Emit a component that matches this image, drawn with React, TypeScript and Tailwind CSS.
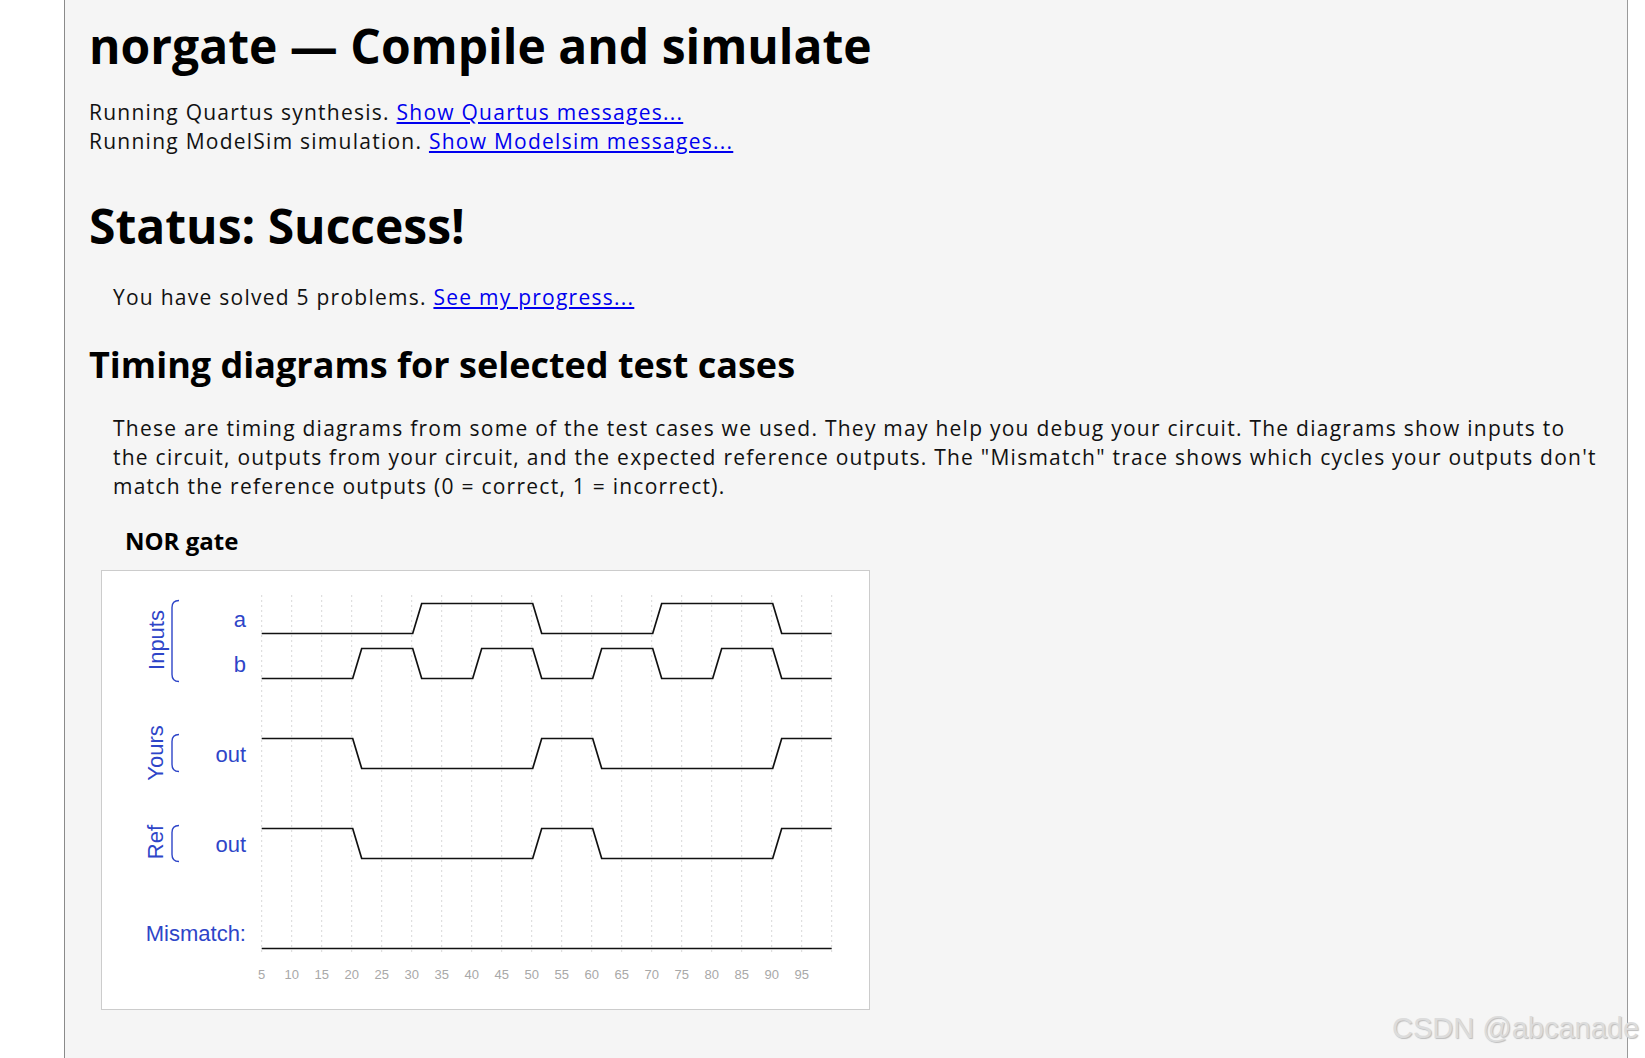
import React from "react";

const BLUE = "#2e45c8";
const SANS = "Liberation Sans, Arial, sans-serif";

function x(t: number) {
  return 159.7 + (t - 5) * 6;
}

function wave(edges: number[], startHigh: boolean, hi: number, lo: number) {
  let level = startHigh;
  let d = `M ${x(5)} ${level ? hi : lo}`;
  for (const t of edges) {
    d += ` L ${x(t) + 1} ${level ? hi : lo}`;
    level = !level;
    d += ` L ${x(t) + 10} ${level ? hi : lo}`;
  }
  d += ` L ${x(100)} ${level ? hi : lo}`;
  return d;
}

function Bracket({ y1, y2 }: { y1: number; y2: number }) {
  const d = `M 77 ${y1} Q 70 ${y1} 70 ${y1 + 7} L 70 ${y2 - 7} Q 70 ${y2} 77 ${y2}`;
  return <path d={d} fill="none" stroke={BLUE} strokeWidth={1.4} />;
}

function Diagram() {
  const grid = Array.from({ length: 20 }, (_, k) => 159.7 + 30 * k);
  const labels = Array.from({ length: 19 }, (_, k) => 5 + 5 * k);
  return (
    <svg width="767" height="438" viewBox="0 0 767 438" className="block">
      <g transform="translate(0 1.5)">
        {grid.map((gx, i) => (
          <line
            key={i}
            x1={gx}
            x2={gx}
            y1={23}
            y2={380}
            stroke="#b0b0b0"
            strokeWidth={1}
            strokeDasharray="1 4"
          />
        ))}
        <g fill="none" stroke="#111" strokeWidth={1.7}>
          <path d={wave([30, 50, 70, 90], false, 31, 61)} />
          <path d={wave([20, 30, 40, 50, 60, 70, 80, 90], false, 76, 106)} />
          <path d={wave([20, 50, 60, 90], true, 166, 196)} />
          <path d={wave([20, 50, 60, 90], true, 256, 286)} />
          <path d={`M ${x(5)} 376 L ${x(100)} 376`} />
        </g>
        <g fill={BLUE} fontFamily={SANS} fontSize={22}>
          <text x={144} y={54} textAnchor="end">a</text>
          <text x={144} y={99} textAnchor="end">b</text>
          <text x={144} y={189} textAnchor="end">out</text>
          <text x={144} y={279} textAnchor="end">out</text>
          <text x={144} y={368} textAnchor="end">Mismatch:</text>
          <text transform="translate(62 67.5) rotate(-90)" textAnchor="middle">Inputs</text>
          <text transform="translate(61 180.5) rotate(-90)" textAnchor="middle">Yours</text>
          <text transform="translate(61 269.5) rotate(-90)" textAnchor="middle">Ref</text>
        </g>
        <Bracket y1={28} y2={109} />
        <Bracket y1={162} y2={199} />
        <Bracket y1={253} y2={289} />
        <g fill="#a8a8a8" fontSize={13} fontFamily={SANS}>
          {labels.map((l, i) => (
            <text key={i} x={159.7 + 30 * i} y={406} textAnchor="middle">
              {l}
            </text>
          ))}
        </g>
      </g>
    </svg>
  );
}

function Link({ children }: { children: React.ReactNode }) {
  return (
    <a href="#" className="text-[#0000ee] underline">
      {children}
    </a>
  );
}

export default function App() {
  const body = "font-['Open_Sans','Noto_Sans',sans-serif] font-normal text-[21px] leading-[29px] tracking-[1.25px] text-[#111]";
  const head = "font-['Open_Sans','Noto_Sans',sans-serif] font-bold";
  return (
    <div className="relative h-[1058px] w-full overflow-hidden bg-white">
      <main className="ml-[64px] flex h-[1058px] w-[1564px] flex-col items-start border-l border-r border-l-[#8a8a8a] border-r-[#9a9a9a] bg-[#f5f5f5] pl-[24px] pt-[18px] text-black">
        <h1 className={`${head} text-[48px] leading-[56px]`}>norgate — Compile and simulate</h1>
        <p className={`${body} mt-[24px]`}>
          Running Quartus synthesis. <Link>Show Quartus messages...</Link>
          <br />
          Running ModelSim simulation. <Link>Show Modelsim messages...</Link>
        </p>
        <h2 className={`${head} mt-[42px] text-[48px] leading-[56px]`}>Status: Success!</h2>
        <p className={`${body} mt-[29px] pl-[24px]`}>
          You have solved 5 problems. <Link>See my progress...</Link>
        </p>
        <h3 className={`${head} mt-[31px] text-[36px] leading-[44px]`}>Timing diagrams for selected test cases</h3>
        <p className={`${body} mt-[27px] whitespace-nowrap pl-[24px]`}>
          These are timing diagrams from some of the test cases we used. They may help you debug your circuit. The diagrams show inputs to
          <br />
          the circuit, outputs from your circuit, and the expected reference outputs. The "Mismatch" trace shows which cycles your outputs don't
          <br />
          match the reference outputs (0 = correct, 1 = incorrect).
        </p>
        <h4 className={`${head} mt-[25px] pl-[36px] text-[24px] leading-[30px]`}>NOR gate</h4>
        <section className="ml-[12px] mt-[14px] border border-[#cccccc] bg-white">
          <Diagram />
        </section>
      </main>
      <div className="absolute left-[1392px] top-[1012px] font-['Liberation_Sans',Arial,sans-serif] text-[29px] leading-[32px] text-[#dcdcdc] [text-shadow:1px_1px_1px_#bdbdbd]">
        CSDN @abcanade
      </div>
    </div>
  );
}
